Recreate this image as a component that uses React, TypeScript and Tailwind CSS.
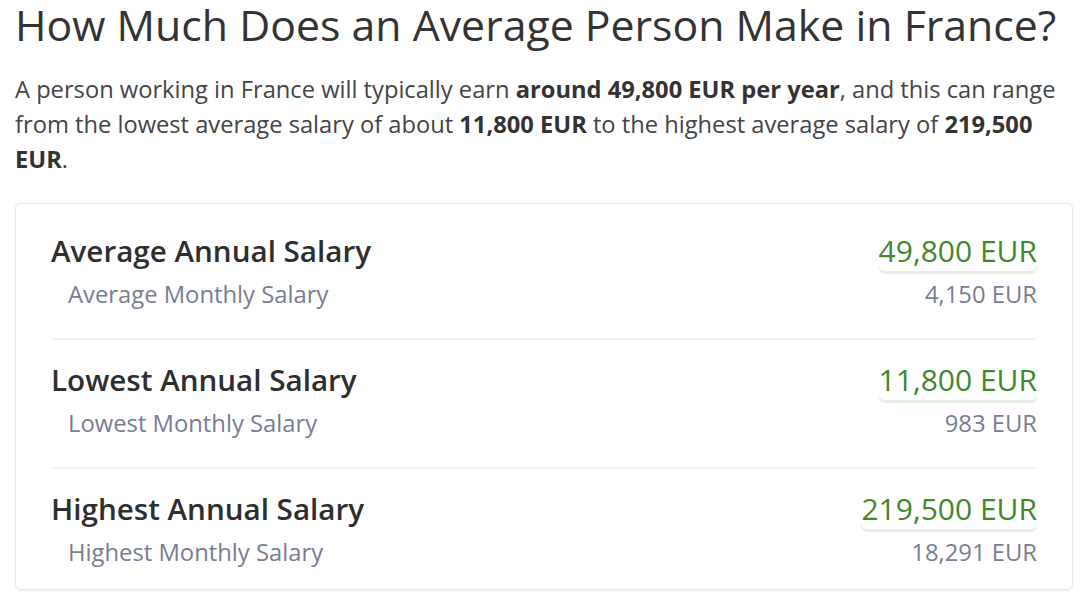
const rows = [
  { title: 'Average Annual Salary', sub: 'Average Monthly Salary', annual: '49,800 EUR', monthly: '4,150 EUR' },
  { title: 'Lowest Annual Salary', sub: 'Lowest Monthly Salary', annual: '11,800 EUR', monthly: '983 EUR' },
  { title: 'Highest Annual Salary', sub: 'Highest Monthly Salary', annual: '219,500 EUR', monthly: '18,291 EUR' },
];

export default function App() {
  return (
    <div className="min-h-[592px] bg-white pl-[15px] pr-[9px] font-['Open_Sans',sans-serif] text-[#333]">
      <h1 className="whitespace-nowrap text-[42.8px] leading-[50px] font-normal">
        How Much Does an Average Person Make in France?
      </h1>
      <p className="mt-[22px] text-[23.7px] leading-[35px] text-[#444]">
        A person working in France will typically earn <b className="font-bold text-[#333]">around 49,800 EUR per year</b>, and
        this can range from the lowest average salary of about <b className="font-bold text-[#333]">11,800 EUR</b> to the
        highest average salary of <b className="font-bold text-[#333]">219,500 EUR</b>.
      </p>
      <div className="mt-[26px] rounded-md border border-[#e4e6ea] bg-white px-[35px] pt-[7px] shadow-[0_1px_3px_rgba(0,0,0,0.06)]">
        {rows.map((r, i) => (
          <div
            key={r.title}
            className={
              i < rows.length - 1
                ? 'border-b-2 border-[#f1f2f4] pt-[20px] pb-[27px]'
                : 'pt-[20px] pb-[20px]'
            }
          >
            <div className="flex items-start justify-between">
              <span className="text-[29.6px] leading-[40px] font-semibold text-[#2e2e2e]">{r.title}</span>
              <span className="rounded-md text-[30px] leading-[40px] font-normal text-[#42872c] shadow-[0_3px_0_#e6efe3]">
                {r.annual}
              </span>
            </div>
            <div className="mt-[7px] flex items-start justify-between text-[23.8px] leading-[33px] text-[#787d93]">
              <span className="pl-[17px]">{r.sub}</span>
              <span>{r.monthly}</span>
            </div>
          </div>
        ))}
      </div>
    </div>
  );
}
